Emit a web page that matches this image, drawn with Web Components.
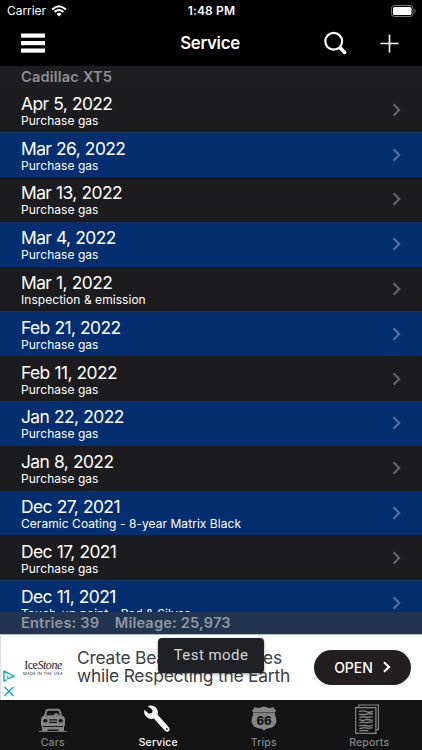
<!DOCTYPE html>
<html lang="en">
<head>
<meta charset="utf-8">
<title>Service</title>
<style>
  body {
    margin: 0;
    background: #000;
    font-family: Inter, "Liberation Sans", sans-serif;
    color: #fff;
  }
</style>
</head>
<body>
<service-app></service-app>

<script>
class StatusBar extends HTMLElement {
  constructor() {
    super();
    this.attachShadow({ mode: "open" });
    this.shadowRoot.innerHTML = `
      <style>
        :host {
          display: grid;
          grid-template-columns: 1fr auto 1fr;
          align-items: center;
          height: 22px;
          padding: 0 6px 0 7px;
          font-size: 12px;
          line-height: 22px;
        }
        .left { display: flex; align-items: center; gap: 5px; letter-spacing: -0.05px; }
        .time { font-weight: 600; letter-spacing: 0.15px; }
        .right { display: flex; justify-content: flex-end; }
        svg { display: block; }
      </style>
      <div class="left">
        <span>Carrier</span>
        <svg width="16" height="12" viewBox="0 0 16 12" fill="none" stroke="#fff">
          <path d="M1.2 4.5Q8-1.9 14.8 4.5" stroke-width="2"/>
          <path d="M3.6 7.1Q8 3 12.4 7.1" stroke-width="2"/>
          <path d="M5.4 8.9Q8 6.7 10.6 8.9L8 11.5Z" fill="#fff" stroke="none"/>
        </svg>
      </div>
      <span class="time">1:48 PM</span>
      <div class="right">
        <svg width="25" height="12" viewBox="0 0 25 12">
          <rect x=".5" y=".5" width="21.5" height="11" rx="3" fill="none" stroke="#777"/>
          <rect x="2" y="2" width="18.5" height="8" rx="1.6" fill="#fff"/>
          <path d="M23.4 4v4q1.2-.6 1.2-2t-1.2-2Z" fill="#777"/>
        </svg>
      </div>`;
  }
}

class NavBar extends HTMLElement {
  constructor() {
    super();
    this.attachShadow({ mode: "open" });
    this.shadowRoot.innerHTML = `
      <style>
        :host {
          display: grid;
          grid-template-columns: 1fr auto 1fr;
          align-items: center;
          box-sizing: border-box;
          height: 43.5px;
          padding: 0 23px 1px 21px;
        }
        .title { font-size: 16.8px; font-weight: 600; letter-spacing: -0.3px; }
        .actions { display: flex; justify-content: flex-end; align-items: center; gap: 33px; }
        svg { display: block; }
      </style>
      <svg width="24" height="20" viewBox="0 0 24 20" fill="#fff">
        <rect y=".5" width="24" height="4.2"/>
        <rect y="8" width="24" height="4.2"/>
        <rect y="15.5" width="24" height="4.2"/>
      </svg>
      <span class="title"><slot></slot></span>
      <div class="actions">
        <svg width="24" height="24" viewBox="0 0 24 24" fill="none" stroke="#fff" stroke-linecap="round">
          <circle cx="10.7" cy="10.3" r="8.4" stroke-width="2.2"/>
          <path d="M17.3 17l4.3 4.4" stroke-width="3.6"/>
        </svg>
        <svg width="19" height="19" viewBox="0 0 19 19" stroke="#fff" stroke-width="1.6">
          <path d="M9.5 .5v18M.5 9.5h18"/>
        </svg>
      </div>`;
  }
}

class ServiceRow extends HTMLElement {
  constructor() {
    super();
    this.attachShadow({ mode: "open" });
    this.shadowRoot.innerHTML = `
      <style>
        :host {
          display: flex;
          flex: none;
          align-items: center;
          justify-content: space-between;
          box-sizing: border-box;
          height: 44.8px;
          padding: 0 21px;
          background: #1c1c1e;
          --chevron: #66666a;
        }
        :host([alt]) {
          background: #032e70;
          --chevron: #5474a5;
          box-shadow: inset 0 1px #14315f;
        }
        .text { display: flex; flex-direction: column; white-space: nowrap; }
        .date { font-size: 17.4px; line-height: 20px; letter-spacing: -0.57px; word-spacing: 0.4px; }
        .note { font-size: 12px; line-height: 13px; letter-spacing: 0.05px; margin-bottom: -1px; }
        svg { display: block; }
      </style>
      <div class="text">
        <span class="date"><slot name="date"></slot></span>
        <span class="note"><slot></slot></span>
      </div>
      <svg width="9" height="14" viewBox="0 0 9 14" fill="none" stroke="var(--chevron)" stroke-width="2">
        <path d="M1.5 1.2L7.2 7l-5.7 5.8"/>
      </svg>`;
  }
}

class ServiceList extends HTMLElement {
  constructor() {
    super();
    this.attachShadow({ mode: "open" });
    this.shadowRoot.innerHTML = `
      <style>
        :host {
          display: flex;
          flex-direction: column;
          height: 546.5px;
          overflow: hidden;
        }
        header {
          flex: none;
          height: 22px;
          padding-left: 21px;
          background: #1e1e20;
          color: #8e8e93;
          font-size: 14.6px;
          font-weight: 600;
          line-height: 23px;
          letter-spacing: 0.18px;
        }
      </style>
      <header>${this.getAttribute("heading")}</header>
      <slot></slot>`;
  }
}

class SummaryBar extends HTMLElement {
  constructor() {
    super();
    this.attachShadow({ mode: "open" });
    this.shadowRoot.innerHTML = `
      <style>
        :host {
          display: flex;
          gap: 15.5px;
          height: 21.5px;
          padding-left: 21px;
          background: #223450;
          color: #9096a3;
          font-size: 14.6px;
          font-weight: 600;
          line-height: 23px;
          letter-spacing: 0.18px;
        }
      </style>
      <slot></slot>`;
  }
}

class AdBanner extends HTMLElement {
  constructor() {
    super();
    this.attachShadow({ mode: "open" });
    this.shadowRoot.innerHTML = `
      <style>
        :host {
          display: flex;
          align-items: center;
          position: relative;
          box-sizing: border-box;
          height: 66.5px;
          padding: 0 11px 0 2px;
          background: #fff;
          border-left: 1px solid #ddd;
          border-top: 1px solid #b5bac3;
          color: #3c4043;
        }
        .choices {
          display: flex;
          flex-direction: column;
          gap: 4px;
          align-self: flex-end;
          width: 12px;
          padding-bottom: 3px;
        }
        .logo {
          display: flex;
          flex-direction: column;
          align-items: center;
          width: 40px;
          margin: 0 14px 0 8px;
          color: #222;
        }
        .name {
          font: 12px/12px "Liberation Serif", serif;
          letter-spacing: -0.45px;
          white-space: nowrap;
        }
        .made {
          font-size: 4px;
          line-height: 5px;
          letter-spacing: 0.3px;
          white-space: nowrap;
        }
        .copy {
          flex: 1;
          font-size: 17.4px;
          line-height: 18.5px;
          letter-spacing: -0.22px;
          white-space: nowrap;
        }
        .open {
          display: flex;
          align-items: center;
          justify-content: center;
          gap: 10px;
          width: 97px;
          height: 35px;
          border-radius: 18px;
          background: #231f20;
          color: #fff;
          font-size: 14px;
          font-weight: 500;
        }
        .toast {
          position: absolute;
          left: 157px;
          top: 3px;
          width: 106px;
          height: 35px;
          border-radius: 4px;
          background: #1f2125;
          box-shadow: 0 1px 3px rgba(0, 0, 0, 0.45);
          color: #d4d5d7;
          font: 15px/35px Roboto, sans-serif;
          letter-spacing: 0.45px;
          text-align: center;
        }
        svg { display: block; }
      </style>
      <div class="choices">
        <svg width="12" height="12" viewBox="0 0 12 12" fill="none" stroke="#14a8cc" stroke-width="1.4">
          <path d="M3.6 9.600L1 11.100V.9L11 6 5.800 8.600" stroke-linejoin="round"/>
          <path d="M4.800 5.200v4M4.800 2.900v1.200" stroke-width="1.300"/>
        </svg>
        <svg width="12" height="11" viewBox="0 0 12 11" stroke="#14a8cc" stroke-width="1.5">
          <path d="M1.500 1l9 9M10.500 1l-9 9"/>
        </svg>
      </div>
      <div class="logo">
        <span class="name">Ice<i>Stone</i></span>
        <span class="made">MADE IN THE USA</span>
      </div>
      <div class="copy">
        <div>Create Beautiful Surfaces</div>
        <div>while Respecting the Earth</div>
      </div>
      <div class="open">
        <span>OPEN</span>
        <svg width="8" height="12" viewBox="0 0 8 12" fill="none" stroke="#fff" stroke-width="2.2">
          <path d="M1 1.2L6 6l-5 4.8"/>
        </svg>
      </div>
      <div class="toast">Test mode</div>`;
  }
}

const TAB_ICONS = {
  cars: `
    <path d="M7.500 6.500Q8.200 4.700 10 4.700h10q1.800 0 2.500 1.800L24 11.500q3 1 3 4v6q0 1-1 1v4q0 1.500-1.500 1.500H22q-1.500 0-1.500-1.500v-1h-11v1q0 1.500-1.500 1.500H5.500Q4 28 4 26.500v-4q-1 0-1-1v-6q0-3 3-4Z" fill="#858585"/>
    <path d="M9.600 6.700h10.800l1.500 4.600H8.100Z" fill="#141414"/>
    <path d="M15.500 11.500q.5-2.300 2.800-2.300t2.700 2.300Z" fill="#858585"/>
    <path d="M11 15.200h8v1.200h-8ZM11 17.700h8v1.200h-8ZM5 22h20v.9H5Z" fill="#141414"/>
    <ellipse cx="7.300" cy="16.700" rx="2.200" ry="1.700" fill="#141414"/>
    <ellipse cx="22.700" cy="16.700" rx="2.200" ry="1.700" fill="#141414"/>
    <path d="M1 27.500h28" stroke="#777" stroke-width="1"/>`,
  wrench: `
    <g transform="translate(-.7 1.200)">
      <path d="M5.500 .8Q10-1 13.500 2.400q3 3.200 1.800 7.200L26.500 22q1.600 2 .2 3.700-1.700 1.600-3.700 0L11.500 13.400Q7.500 14.500 4.300 11.800 1 8.700 2.200 4.500L6.500 8.600l3.200-.7.700-3.200Z" fill="#fff"/>
      <circle cx="24.500" cy="23.700" r=".9" fill="#141414"/>
    </g>`,
  route: `
    <path d="M6 3q3 1.500 5.500.6Q15 2 18.500 3.600 21 4.500 24 3l3 3.500q-2 3-.3 6.500 2 5-1 8.500Q23.500 24 20 24.300q-3 .3-5 2.200-2-1.900-5-2.200-3.500-.3-5.700-2.800-3-3.500-1-8.500Q5 9.500 3 6.500Z" fill="#858585"/>
    <path d="M4.500 8.700h21" stroke="#444" stroke-width="1"/>
    <text x="15" y="21" text-anchor="middle" font-size="11.500" font-weight="800" letter-spacing="0" fill="#141414">66</text>`,
  report: `
    <g transform="translate(-1.600 .7)">
      <path d="M6.500 3V.3H26V25h-2.500" fill="none" stroke="#858585" stroke-width="1.200"/>
      <path d="M3.300 3h20.200v25.700H3.300Z" fill="none" stroke="#858585" stroke-width="1.200"/>
      <path d="M6.500 7q4-1.500 7-.2t7-.2M6.500 9.800h7l2-1 5 .5M7 12.600q4-1.200 7 .2l6-.8M6.500 15l4 1 4-1.200 6 .8M7 18.200q3-1.500 6-.3l7-.7M6.500 21l6-.3 3 1 5-1M7 24l5-1 4 .7 4-.8M7 26h9" fill="none" stroke="#858585" stroke-width="1.300"/>
    </g>`
};

class TabItem extends HTMLElement {
  constructor() {
    super();
    this.attachShadow({ mode: "open" });
    this.shadowRoot.innerHTML = `
      <style>
        :host {
          display: flex;
          flex: 1;
          flex-direction: column;
          align-items: center;
          padding-top: 4px;
          color: #858585;
          font-size: 10.4px;
          font-weight: 500;
          line-height: 14px;
          letter-spacing: 0.2px;
        }
        :host([selected]) { color: #fff; }
        svg { display: block; height: 30px; margin-bottom: 1.5px; }
      </style>
      <svg width="30" height="30" viewBox="0 0 30 30">${TAB_ICONS[this.getAttribute("icon")]}</svg>
      <span><slot></slot></span>`;
  }
}

class TabBar extends HTMLElement {
  constructor() {
    super();
    this.attachShadow({ mode: "open" });
    this.shadowRoot.innerHTML = `
      <style>
        :host { display: flex; height: 50px; background: #141414; }
      </style>
      <slot></slot>`;
  }
}

class ServiceApp extends HTMLElement {
  constructor() {
    super();
    this._entries = [
      ["Apr 5, 2022", "Purchase gas"],
      ["Mar 26, 2022", "Purchase gas"],
      ["Mar 13, 2022", "Purchase gas"],
      ["Mar 4, 2022", "Purchase gas"],
      ["Mar 1, 2022", "Inspection &amp; emission"],
      ["Feb 21, 2022", "Purchase gas"],
      ["Feb 11, 2022", "Purchase gas"],
      ["Jan 22, 2022", "Purchase gas"],
      ["Jan 8, 2022", "Purchase gas"],
      ["Dec 27, 2021", "Ceramic Coating - 8-year Matrix Black"],
      ["Dec 17, 2021", "Purchase gas"],
      ["Dec 11, 2021", "Touch-up paint - Red &amp; Silver"]
    ];
    this.attachShadow({ mode: "open" });
    this.shadowRoot.innerHTML = `
      <style>
        :host {
          display: flex;
          flex-direction: column;
          width: 422px;
          height: 750px;
          overflow: hidden;
        }
      </style>
      <status-bar></status-bar>
      <nav-bar>Service</nav-bar>
      <service-list heading="Cadillac XT5">${this._rows()}</service-list>
      <summary-bar><span>Entries: 39</span><span>Mileage: 25,973</span></summary-bar>
      <ad-banner></ad-banner>
      <tab-bar>
        <tab-item icon="cars">Cars</tab-item>
        <tab-item icon="wrench" selected>Service</tab-item>
        <tab-item icon="route">Trips</tab-item>
        <tab-item icon="report">Reports</tab-item>
      </tab-bar>`;
  }

  // Every second row gets the blue background
  _rows() {
    return this._entries
      .map(([date, note], i) =>
        `<service-row ${i % 2 ? "alt" : ""}><span slot="date">${date}</span>${note}</service-row>`)
      .join("");
  }
}

customElements.define("status-bar", StatusBar);
customElements.define("nav-bar", NavBar);
customElements.define("service-row", ServiceRow);
customElements.define("service-list", ServiceList);
customElements.define("summary-bar", SummaryBar);
customElements.define("ad-banner", AdBanner);
customElements.define("tab-item", TabItem);
customElements.define("tab-bar", TabBar);
customElements.define("service-app", ServiceApp);
</script>
</body>
</html>
